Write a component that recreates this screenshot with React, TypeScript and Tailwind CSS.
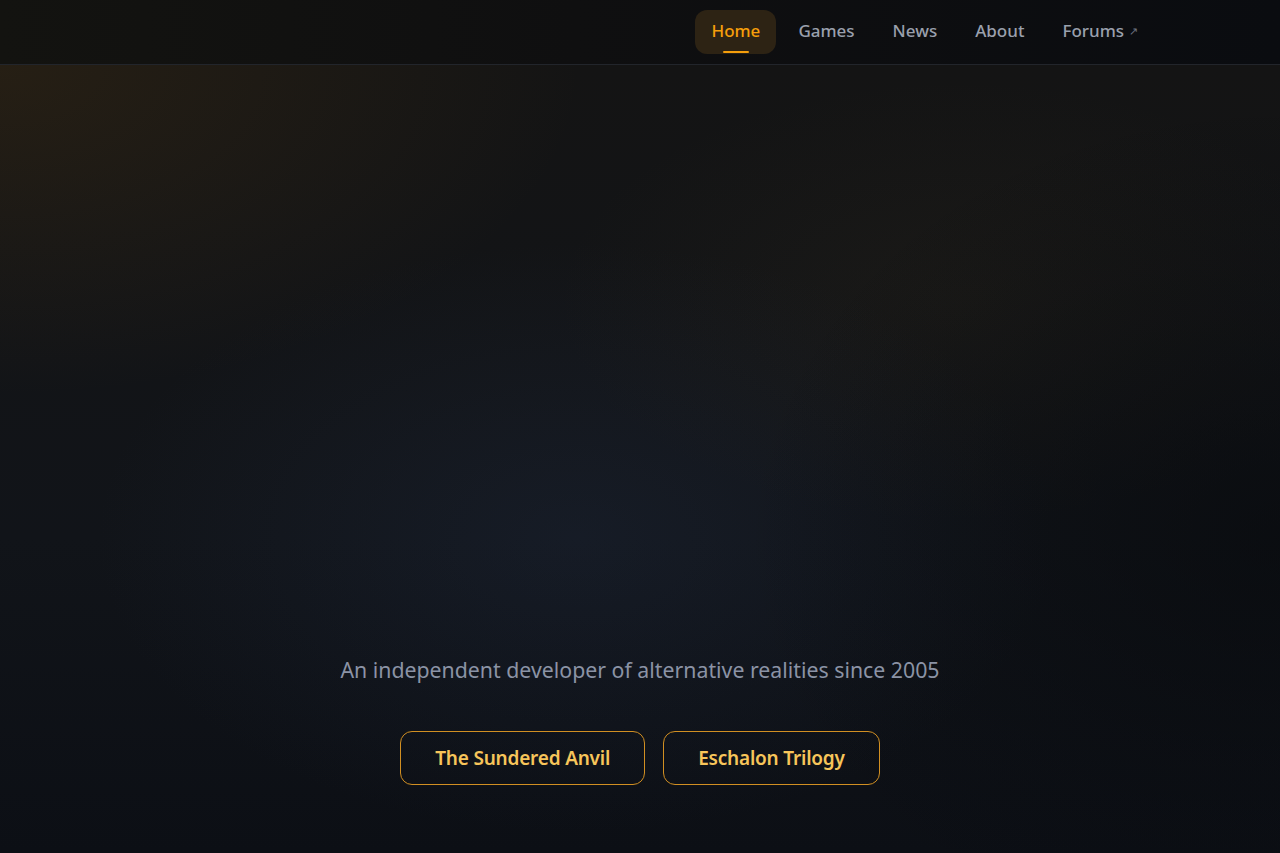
import { useState } from 'react';

const navLinks = [
    { label: 'Home', href: '#' },
    { label: 'Games', href: '#games' },
    { label: 'News', href: '#news' },
    { label: 'About', href: '#about' },
    { label: 'Forums', href: '#forums', external: true },
];

function NavBar() {
    const [active, setActive] = useState('Home');

    return (
        <header className="h-[65px] border-b border-[#22252b] bg-[linear-gradient(90deg,#131310_0%,#0f0f10_45%,#0a0c10_100%)]">
            <nav className="h-full flex items-center justify-end pr-[126px]">
                <ul className="flex items-center gap-[6px]">
                    {navLinks.map((link) => {
                        const isActive = link.label === active;
                        return (
                            <li key={link.label}>
                                <a
                                    href={link.href}
                                    onClick={() => setActive(link.label)}
                                    className={`relative flex items-center h-[44px] px-4 pb-[2px] rounded-xl text-[17px] font-medium transition-colors ${isActive ? 'bg-[#2d2314] text-[#f59e0b]' : 'text-[#9aa0ad] hover:text-white'}`}
                                >
                                    {link.label}
                                    {link.external && <span className="ml-[5px] text-[11px] text-[#6b7280]">↗</span>}
                                    {isActive && (
                                        <span className="absolute left-1/2 -translate-x-1/2 bottom-[1px] w-[26px] h-[2px] rounded-full bg-[#f59e0b]" />
                                    )}
                                </a>
                            </li>
                        );
                    })}
                </ul>
            </nav>
        </header>
    );
}

export default function App() {
    return (
        <div
            className="min-h-[853px] flex flex-col bg-[#0e1116] text-white"
            style={{ fontFamily: '"Noto Sans", "Open Sans", sans-serif' }}
        >
            <NavBar />
            <main className="relative flex-1 flex flex-col items-center justify-end pb-[68px] overflow-hidden bg-[radial-gradient(ellipse_65%_60%_at_0%_0%,rgba(120,80,20,0.18),transparent_70%),radial-gradient(ellipse_45%_40%_at_75%_30%,rgba(90,70,30,0.10),transparent_70%),radial-gradient(ellipse_50%_50%_at_45%_60%,rgba(40,55,85,0.22),transparent_75%),linear-gradient(180deg,#141414_0%,#111419_60%,#0c0f15_100%)]">
                <div className="pointer-events-none absolute inset-0 bg-[radial-gradient(ellipse_60%_80%_at_100%_60%,rgba(5,7,10,0.55),transparent_70%)]" />
                <p className="relative text-[21.3px] leading-7 text-[#8b93a5]">
                    An independent developer of alternative realities since 2005
                </p>
                <div className="relative mt-[47px] flex gap-[18px]">
                    <a href="#sundered-anvil" className="flex items-center h-[54px] px-[34px] rounded-xl border border-[#d18f22] text-[19px] font-semibold text-[#f7c55a] tracking-[-0.2px] hover:bg-[#f59e0b]/10">
                        The Sundered Anvil
                    </a>
                    <a href="#eschalon" className="flex items-center h-[54px] px-[34px] rounded-xl border border-[#d18f22] text-[19px] font-semibold text-[#f7c55a] tracking-[-0.2px] hover:bg-[#f59e0b]/10">
                        Eschalon Trilogy
                    </a>
                </div>
            </main>
        </div>
    );
}
